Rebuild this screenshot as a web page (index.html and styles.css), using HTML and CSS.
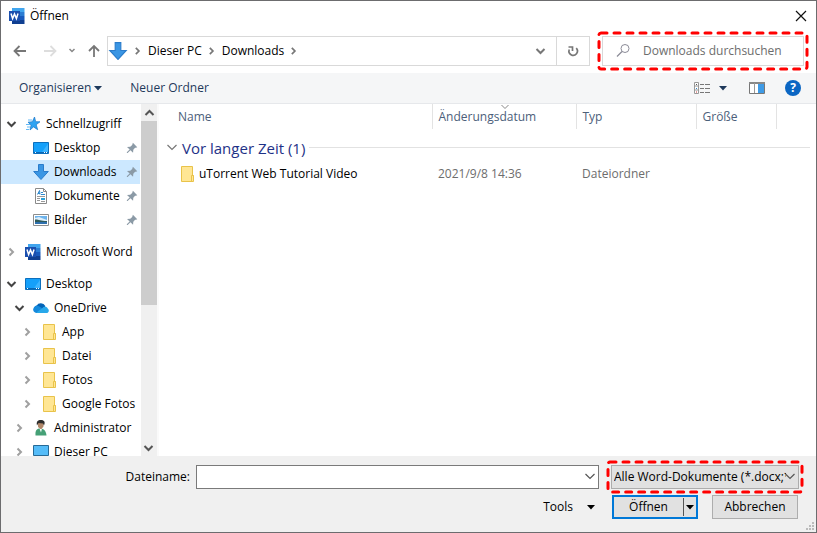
FILE: index.html
```html
<!DOCTYPE html>
<html lang="de">

<head>
    <meta charset="UTF-8">
    <meta name="viewport" content="width=device-width, initial-scale=1.0">
    <title>Öffnen</title>
    <link rel="stylesheet" href="styles.css">
</head>

<body>
    <!-- shared icons -->
    <svg class="sprite" aria-hidden="true">
        <symbol id="word" viewBox="0 0 16 16">
            <path d="M3 0h12.500v4H3z" fill="#41a5ee" />
            <path d="M3 4h12.500v4H3z" fill="#2b7cd3" />
            <path d="M3 8h12.500v4H3z" fill="#185abd" />
            <path d="M3 12h12.500v4H3z" fill="#103f91" />
            <path d="M0 3h11v10H0z" fill="#1b4fae" />
            <path d="M2 5.500l1.600 5 1.900-4.600 1.900 4.600 1.600-5" fill="none" stroke="#fff" stroke-width="1.500" />
        </symbol>
        <symbol id="down-arrow" viewBox="0 0 16 16">
            <path d="M5.500.5h5v7h4.800L8 15.500.7 7.500h4.800z" fill="#3a96e4" stroke="#2a7ccb" />
        </symbol>
        <symbol id="chev-right" viewBox="0 0 16 16">
            <path d="M5.500 4.500L9 8l-3.500 3.500" fill="none" stroke="currentColor" stroke-width="2" />
        </symbol>
        <symbol id="chev-down" viewBox="0 0 16 16">
            <path d="M3.500 6l4 4 4-4" fill="none" stroke="currentColor" stroke-width="2" />
        </symbol>
        <symbol id="chev-thin" viewBox="0 0 16 16">
            <path d="M3.500 5L8 9.500 12.500 5" fill="none" stroke="currentColor" stroke-width="1.200" />
        </symbol>
        <symbol id="caret" viewBox="0 0 16 16">
            <path d="M4 6h8l-4 4.500z" fill="currentColor" />
        </symbol>
        <symbol id="star" viewBox="0 0 16 16">
            <path d="M9.500 1l1.200 4.700 4.300.1-3.800 2.900 1.500 5-4.200-2.800L5 14l1.100-5L3 6.200l4.400-.5z" fill="#2ea3f2" stroke="#1876c8" stroke-width=".7" />
            <path d="M3 4h4M1 8.500h4M2 11h3M1 13.500h3" stroke="#64b9f4" />
        </symbol>
        <symbol id="desktop" viewBox="0 0 16 16">
            <path d="M.5 2.500h15v11H.5z" fill="#15a0fa" stroke="#0c6fbd" />
            <path d="M9 12L15 4v8z" fill="#3db4ff" />
            <path d="M1 12.500h14" stroke="#0a67b4" />
            <path d="M2 12.500h1M11 12.500h1M13 12.500h1" stroke="#fff" />
        </symbol>
        <symbol id="document" viewBox="0 0 16 16">
            <path d="M2.500.5h8l3 3v12h-11z" fill="#fff" stroke="#8a8a8a" />
            <path d="M10.500.5v3h3" fill="none" stroke="#8a8a8a" />
            <path d="M4.500 6.500l2-4 .5 4M5 5.500h2M8 4.500h2M8 6.500h4" fill="none" stroke="#2f8ad0" />
            <path d="M4 8.500h8M4 10.500h3M4 12.500h3M8 13.500h4" stroke="#999" />
            <path d="M8 10h4v2H8z" fill="#2ba0d8" />
        </symbol>
        <symbol id="picture" viewBox="0 0 16 16">
            <path d="M.5 2.500h15v11H.5z" fill="#fff" stroke="#8d8d8d" />
            <path d="M2 4h12v8H2z" fill="#6db3ec" />
            <path d="M2 6l4-1 8 3v1H2z" fill="#dceefa" />
            <path d="M2 7.500c3-.5 5 1.500 12 1.500v1.500H2z" fill="#2f5a5a" />
            <path d="M2 10h12v2H2z" fill="#2e70ae" />
        </symbol>
        <symbol id="cloud" viewBox="0 0 16 16">
            <path d="M4 13a3.800 3.800 0 0 1-.5-7.300A5 5 0 0 1 12.300 6L11 11z" fill="#0364b8" />
            <path d="M2 12.500A3.600 3.600 0 0 1 6 6.300l6 3.700-3 3z" fill="#1489dc" />
            <path d="M3 13c3-3 5-3.500 6.500-5 .8-1.500 4.500-2 5.200.5 2 1.500 1.300 4.500-1.400 4.500z" fill="#28a8ea" />
        </symbol>
        <symbol id="folder" viewBox="0 0 16 16">
            <path d="M2.500.5h11v9h1v6h-12z" fill="#ffe694" stroke="#e9c34a" />
            <path d="M12.500 15.500v-6h2" fill="none" stroke="#e9c34a" />
        </symbol>
        <symbol id="user" viewBox="0 0 16 16">
            <path d="M2.500 15.500C2 11 3.500 8.500 7 8.500c4 0 6 2.500 6.500 7z" fill="#45a076" />
            <path d="M6.500 8.500L8 12.500l1-4z" fill="#fff" />
            <path d="M5 3h5.500v3.500L8.500 9h-1L5 7z" fill="#b08769" />
            <path d="M4 5.500C3 1.500 5 0 8 .1c3.500 0 4.500 2.400 3 5.400L10 3.500 5.500 3z" fill="#2d2d2d" />
        </symbol>
        <symbol id="monitor" viewBox="0 0 16 16">
            <path d="M.5 1.500h15v10H.5z" fill="#55bcf8" stroke="#276a96" />
            <path d="M7 12h2v2h3v1H4v-1h3z" fill="#65869a" />
        </symbol>
        <symbol id="pin" viewBox="0 0 16 16">
            <path d="M9 2l5 5-1.500.6-1 .1-2 2.300-.3 3.500-3-3L3 13.800l-1-.2.300-1L5.300 9.800l-3-3 3.700-.3 2.200-2z" fill="#8b9aa6" />
        </symbol>
    </svg>

    <div class="dialog">
        <header class="titlebar">
            <svg class="icon"><use href="#word" /></svg>
            <h1>Öffnen</h1>
            <button class="close" aria-label="Schließen">
                <svg class="icon" viewBox="0 0 16 16"><path d="M3 3l10 10M13 3L3 13" stroke="#111" stroke-width="1.200" /></svg>
            </button>
        </header>

        <nav class="navbar">
            <div class="history">
                <button aria-label="Zurück"><svg class="icon" viewBox="0 0 16 16"><path d="M14 8H3M7.500 3L2.500 8l5 5" fill="none" stroke="#777" stroke-width="1.800" /></svg></button>
                <button aria-label="Vorwärts"><svg class="icon" viewBox="0 0 16 16"><path d="M2 8h11M8.500 3l5 5-5 5" fill="none" stroke="#ddd" stroke-width="1.800" /></svg></button>
                <button class="narrow" aria-label="Verlauf"><svg class="icon" viewBox="0 0 16 16"><path d="M5.500 6L8 8.500 10.500 6" fill="none" stroke="#888" stroke-width="1.500" /></svg></button>
                <button aria-label="Nach oben"><svg class="icon" viewBox="0 0 16 16"><path d="M8 14V3M3 8l5-5 5 5" fill="none" stroke="#777" stroke-width="1.800" /></svg></button>
            </div>
            <div class="address">
                <svg class="place"><use href="#down-arrow" /></svg>
                <svg class="icon sep"><use href="#chev-right" /></svg>
                <a href="#">Dieser PC</a>
                <svg class="icon sep"><use href="#chev-right" /></svg>
                <a href="#">Downloads</a>
                <svg class="icon sep"><use href="#chev-right" /></svg>
                <button class="drop" aria-label="Vorherige Orte"><svg class="icon"><use href="#chev-down" /></svg></button>
                <button class="refresh" aria-label="Aktualisieren"><svg class="icon" viewBox="0 0 16 16"><path d="M11.200 5.200A4.200 4.200 0 1 1 4.300 6.500M3.500 4h4v4" fill="none" stroke="#777" stroke-width="1.700" /></svg></button>
            </div>
            <div class="marked search">
                <svg class="icon" viewBox="0 0 16 16"><circle cx="10" cy="5.500" r="4" fill="none" stroke="#8c8c98" /><path d="M7 8.500L2 13.500" stroke="#8c8c98" stroke-width="1.200" /></svg>
                <input type="text" placeholder="Downloads durchsuchen" aria-label="Downloads durchsuchen">
                <svg class="mark"><rect width="100%" height="100%" rx="2" /></svg>
            </div>
        </nav>

        <div class="toolbar">
            <button>Organisieren <svg class="icon"><use href="#caret" /></svg></button>
            <button>Neuer Ordner</button>
            <div class="views">
                <button aria-label="Ansicht ändern">
                    <svg class="icon" viewBox="0 0 16 16"><path d="M.5 2.500h4v11h-4zM.5 6h4M.5 10h4" fill="#fff" stroke="#999" /><path d="M6 4.500h4M11 4.500h5M6 8.500h4M11 8.500h5M6 12.500h4M11 12.500h5" stroke="#777" /><path d="M2 4.500h1" stroke="#555" /><path d="M2 8.500h1" stroke="#38c" /><path d="M2 12h1" stroke="#c33" /></svg>
                    <svg class="icon"><use href="#caret" /></svg>
                </button>
                <button aria-label="Vorschaufenster">
                    <svg class="icon" viewBox="0 0 16 16"><path d="M.5 2.500h15v11H.5z" fill="#fff" stroke="#777" /><path d="M0 3h16" stroke="#888" stroke-width="2" /><path d="M5.500 3v10" stroke="#999" /><path d="M9 4h6v9H9z" fill="#3f9be6" /></svg>
                </button>
                <button aria-label="Hilfe" class="help">?</button>
            </div>
        </div>

        <main class="content">
            <aside class="sidebar">
                <ul class="tree">
                    <li class="row dark"><button aria-label="Zuklappen"><svg class="icon"><use href="#chev-down" /></svg></button><a href="#"><svg class="icon"><use href="#star" /></svg>Schnellzugriff</a></li>
                    <li class="row level1"><a href="#"><svg class="icon"><use href="#desktop" /></svg>Desktop</a><svg class="pin"><use href="#pin" /></svg></li>
                    <li class="row level1 selected"><a href="#"><svg class="icon"><use href="#down-arrow" /></svg>Downloads</a><svg class="pin"><use href="#pin" /></svg></li>
                    <li class="row level1"><a href="#"><svg class="icon"><use href="#document" /></svg>Dokumente</a><svg class="pin"><use href="#pin" /></svg></li>
                    <li class="row level1"><a href="#"><svg class="icon"><use href="#picture" /></svg>Bilder</a><svg class="pin"><use href="#pin" /></svg></li>
                    <li class="row section"><button aria-label="Aufklappen"><svg class="icon"><use href="#chev-right" /></svg></button><a href="#"><svg class="icon"><use href="#word" /></svg>Microsoft Word</a></li>
                    <li class="row section dark"><button aria-label="Zuklappen"><svg class="icon"><use href="#chev-down" /></svg></button><a href="#"><svg class="icon"><use href="#desktop" /></svg>Desktop</a></li>
                    <li class="row level1 dark"><button aria-label="Zuklappen"><svg class="icon"><use href="#chev-down" /></svg></button><a href="#"><svg class="icon"><use href="#cloud" /></svg>OneDrive</a></li>
                    <li class="row level2"><button aria-label="Aufklappen"><svg class="icon"><use href="#chev-right" /></svg></button><a href="#"><svg class="icon"><use href="#folder" /></svg>App</a></li>
                    <li class="row level2"><button aria-label="Aufklappen"><svg class="icon"><use href="#chev-right" /></svg></button><a href="#"><svg class="icon"><use href="#folder" /></svg>Datei</a></li>
                    <li class="row level2"><button aria-label="Aufklappen"><svg class="icon"><use href="#chev-right" /></svg></button><a href="#"><svg class="icon"><use href="#folder" /></svg>Fotos</a></li>
                    <li class="row level2"><button aria-label="Aufklappen"><svg class="icon"><use href="#chev-right" /></svg></button><a href="#"><svg class="icon"><use href="#folder" /></svg>Google Fotos</a></li>
                    <li class="row level1"><button aria-label="Aufklappen"><svg class="icon"><use href="#chev-right" /></svg></button><a href="#"><svg class="icon"><use href="#user" /></svg>Administrator</a></li>
                    <li class="row level1"><button aria-label="Aufklappen"><svg class="icon"><use href="#chev-right" /></svg></button><a href="#"><svg class="icon"><use href="#monitor" /></svg>Dieser PC</a></li>
                </ul>
                <div class="scrollbar">
                    <button aria-label="Nach oben scrollen"><svg class="icon flip"><use href="#chev-down" /></svg></button>
                    <div class="track"><div class="thumb"></div></div>
                    <button aria-label="Nach unten scrollen"><svg class="icon"><use href="#chev-down" /></svg></button>
                </div>
            </aside>

            <div class="files">
                <table>
                    <colgroup>
                        <col class="col-name">
                        <col class="col-date">
                        <col class="col-type">
                        <col class="col-size">
                        <col>
                    </colgroup>
                    <thead>
                        <tr>
                            <th>Name</th>
                            <th class="sorted">Änderungsdatum<svg class="sort" viewBox="0 0 10 6"><path d="M1.500 1L5 4.500 8.500 1" fill="none" stroke="#888" /></svg></th>
                            <th>Typ</th>
                            <th>Größe</th>
                            <td></td>
                        </tr>
                    </thead>
                    <tbody>
                        <tr>
                            <td colspan="5">
                                <div class="group"><svg class="icon"><use href="#chev-thin" /></svg>Vor langer Zeit (1)</div>
                            </td>
                        </tr>
                        <tr class="file">
                            <td><a href="#"><svg class="icon"><use href="#folder" /></svg>uTorrent Web Tutorial Video</a></td>
                            <td>2021/9/8 14:36</td>
                            <td>Dateiordner</td>
                            <td></td>
                            <td></td>
                        </tr>
                    </tbody>
                </table>
            </div>
        </main>

        <footer class="footer">
            <div class="line">
                <label class="name-label" for="filename">Dateiname:</label>
                <div class="combo">
                    <input type="text" id="filename">
                    <button aria-label="Liste öffnen"><svg class="icon"><use href="#chev-thin" /></svg></button>
                </div>
                <div class="marked filter">
                    <select aria-label="Dateityp">
                        <option>Alle Word-Dokumente (*.docx;*.docm)</option>
                    </select>
                    <svg class="icon"><use href="#chev-thin" /></svg>
                    <svg class="mark"><rect width="100%" height="100%" rx="2" /></svg>
                </div>
            </div>
            <div class="line actions">
                <button class="tools">Tools <svg class="icon"><use href="#caret" /></svg></button>
                <div class="split">
                    <button>Öffnen</button>
                    <button class="more" aria-label="Weitere Optionen"><svg class="icon"><use href="#caret" /></svg></button>
                </div>
                <button class="cancel">Abbrechen</button>
            </div>
            <svg class="grip" viewBox="0 0 9 9"><path d="M7 0h2v2H7zM7 3h2v2H7zM7 6h2v2H7zM4 3h2v2H4zM4 6h2v2H4zM1 6h2v2H1z" fill="#bbb" /></svg>
        </footer>
    </div>
</body>

</html>
```

FILE: styles.css
```css
* {
    margin: 0;
    padding: 0;
    box-sizing: border-box;
    list-style: none;
}

body {
    font: 12px/16px "Open Sans", "Noto Sans", sans-serif;
    color: #000;
}

button, input, select {
    font: inherit;
    color: inherit;
    border: none;
    background: none;
    outline: none;
}

button {
    display: flex;
    align-items: center;
    justify-content: center;
}

a {
    color: inherit;
    text-decoration: none;
}

.sprite {
    display: none;
}

.icon {
    width: 16px;
    height: 16px;
    flex: none;
}

.dialog {
    height: 100vh;
    display: flex;
    flex-direction: column;
    border: 1px solid #6c6c6e;
    background: #fff;
    white-space: nowrap;
}

/* title */
.titlebar {
    height: 30px;
    flex: none;
    display: flex;
    align-items: center;
    gap: 5px;
    padding: 0 7px 0 8px;
}

.titlebar h1 {
    font-size: 12px;
    font-weight: normal;
}

.close {
    margin-left: auto;
}

/* navigation */
.navbar {
    height: 42px;
    flex: none;
    display: flex;
    align-items: center;
    padding: 0 12px 2px 11px;
}

.history {
    display: flex;
    width: 95px;
    gap: 14px;
}

.history .narrow {
    margin: 0 -8px;
}

.address {
    flex: 1;
    height: 30px;
    display: flex;
    align-items: center;
    gap: 3px;
    border: 1px solid #d9d9d9;
}

.address .place {
    width: 20px;
    height: 18px;
}

.address .sep {
    width: 14px;
    color: #777;
}

.address .drop {
    margin-left: auto;
    width: 24px;
    color: #777;
}

.address .refresh {
    width: 33px;
    height: 28px;
    border-left: 1px solid #d9d9d9;
}

.marked {
    position: relative;
}

.mark {
    position: absolute;
    top: -4px;
    left: -4px;
    width: calc(100% + 8px);
    height: calc(100% + 8px);
    overflow: visible;
    pointer-events: none;
}

.mark rect {
    fill: none;
    stroke: #f00;
    stroke-width: 3px;
    stroke-linecap: round;
    stroke-dasharray: 6 7;
}

.search {
    width: 202px;
    height: 30px;
    margin-left: 12px;
    display: flex;
    align-items: center;
    gap: 12px;
    padding-left: 12px;
    border: 1px solid #d9d9d9;
}

.search input {
    flex: 1;
    min-width: 0;
}

.search input::placeholder {
    color: #6d6d6d;
}

/* commands */
.toolbar {
    height: 31px;
    flex: none;
    display: flex;
    align-items: center;
    gap: 24px;
    padding: 0 15px 0 18px;
    background: #f5f6f7;
    border-bottom: 1px solid #e6e8eb;
    color: #1e395b;
}

.toolbar .icon {
    margin-left: -2px;
}

.toolbar button {
    gap: 1px;
}

.views {
    margin-left: auto;
    display: flex;
    align-items: center;
    gap: 20px;
}

.views button:first-child {
    gap: 7px;
}

.toolbar .help {
    width: 16px;
    height: 16px;
    border-radius: 50%;
    background: #0b66c3;
    color: #fff;
    font-weight: bold;
}

/* folder tree */
.content {
    flex: 1;
    min-height: 0;
    display: flex;
}

.sidebar {
    width: 158px;
    flex: none;
    display: flex;
    border-right: 2px solid #fafafa;
}

.tree {
    flex: 1;
    padding-top: 8px;
    overflow: hidden;
}

.row {
    height: 24px;
    display: flex;
    align-items: center;
    gap: 5px;
    padding-left: 3px;
    margin-right: 1px;
    color: #000;
}

.row a {
    display: flex;
    align-items: center;
    gap: 5px;
}

.row button {
    color: #a0a0a0;
}

.dark button {
    color: #444;
}

.section {
    margin-top: 8px;
}

.level1 {
    padding-left: 11px;
}

.level1 a:first-child {
    margin-left: 21px;
}

.level2 {
    padding-left: 19px;
}

.selected {
    background: #cce8ff;
}

.pin {
    width: 14px;
    height: 14px;
    margin-left: auto;
    margin-right: 1px;
}

.scrollbar {
    width: 16px;
    display: flex;
    flex-direction: column;
    background: #f0f0f0;
    color: #555;
}

.scrollbar button {
    height: 17px;
}

.flip {
    transform: rotate(180deg);
}

.track {
    flex: 1;
}

.thumb {
    height: 58%;
    background: #cdcdcd;
}

/* file list */
.files {
    flex: 1;
    min-width: 0;
    padding-right: 6px;
}

table {
    width: 100%;
    table-layout: fixed;
    border-collapse: collapse;
}

.col-name {
    width: 273px;
}

.col-date {
    width: 144px;
}

.col-type {
    width: 120px;
}

.col-size {
    width: 80px;
}

th {
    height: 25px;
    padding-left: 6px;
    border-right: 1px solid #e3e3e3;
    text-align: left;
    font-weight: normal;
    color: #4c607a;
}

th:first-child {
    padding-left: 19px;
}

.sorted {
    position: relative;
}

.sort {
    position: absolute;
    top: 0;
    left: 67px;
    width: 10px;
    height: 6px;
}

.group {
    height: 37px;
    display: flex;
    align-items: center;
    gap: 2px;
    padding-left: 5px;
    font-size: 15px;
    color: #1e3287;
}

.group .icon {
    color: #777;
}

.group::after {
    content: "";
    flex: 1;
    height: 1px;
    margin-left: 2px;
    background: #e2e2e2;
}

.file td {
    height: 16px;
    padding-left: 6px;
    color: #6d6d6d;
}

.file td:first-child {
    padding-left: 20px;
}

.file a {
    display: flex;
    gap: 4px;
    color: #000;
}

/* bottom area */
.footer {
    flex: none;
    position: relative;
    display: flex;
    flex-direction: column;
    gap: 6px;
    padding: 9px 17px 13px;
    background: #f0f0f0;
}

.line {
    height: 24px;
    display: flex;
    align-items: center;
}

.name-label {
    width: 172px;
    text-align: right;
}

.combo {
    flex: 1;
    height: 24px;
    margin-left: 6px;
    display: flex;
    border: 1px solid #7a7a7a;
    background: #fff;
}

.combo input {
    flex: 1;
    min-width: 0;
    padding: 0 4px;
}

.combo button {
    width: 16px;
    color: #555;
}

.filter {
    width: 188px;
    height: 24px;
    margin-left: 12px;
    display: flex;
    align-items: center;
    border: 1px solid #adadad;
    background: #e1e1e1;
    color: #000;
}

.filter select {
    flex: 1;
    min-width: 0;
    height: 22px;
    appearance: none;
    padding-left: 2px;
}

.filter .icon {
    margin-left: -4px;
    color: #555;
}

.actions {
    justify-content: flex-end;
    padding-right: 1px;
}

.tools {
    gap: 10px;
    margin-right: 13px;
}

.split {
    width: 86px;
    height: 24px;
    display: flex;
    border: 2px solid #0078d7;
    background: #e1e1e1;
}

.split button {
    flex: 1;
}

.split .more {
    flex: none;
    width: 13px;
    margin: 1px 0;
    border-left: 1px solid #555;
}

.cancel {
    width: 86px;
    height: 24px;
    margin-left: 14px;
    border: 1px solid #adadad;
    background: #e1e1e1;
}

.grip {
    position: absolute;
    right: 2px;
    bottom: 1px;
    width: 9px;
    height: 9px;
}
```
